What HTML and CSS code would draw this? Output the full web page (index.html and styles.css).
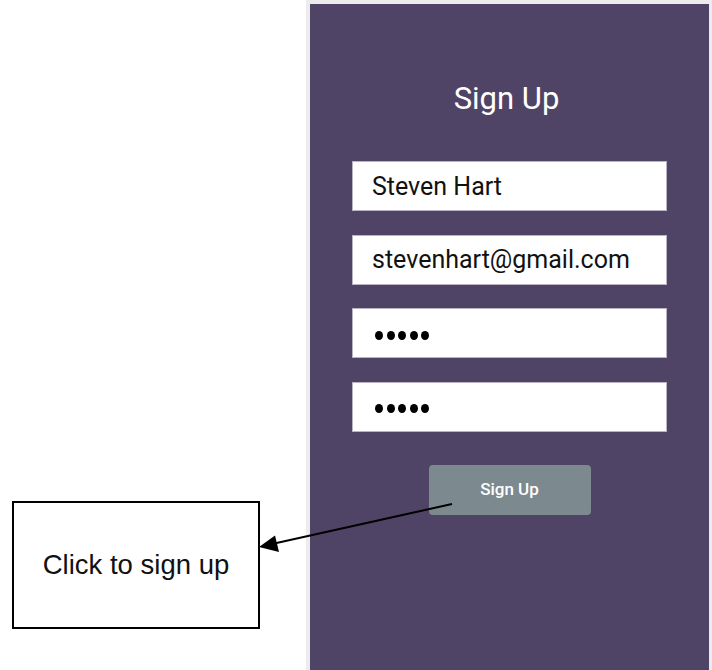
FILE: index.html
```html
<!DOCTYPE html>
<html>
<head>
<meta charset="utf-8">
<link rel="stylesheet" href="styles.css">
</head>
<body>
<div class="page">
  <div class="notes">
    <div class="callout">Click to sign up</div>
  </div>
  <div class="frame">
    <div class="screen">
      <h1 class="title">Sign Up</h1>
      <div class="form">
        <div class="field">Steven Hart</div>
        <div class="field">stevenhart@gmail.com</div>
        <div class="field dots"><span></span><span></span><span></span><span></span><span></span></div>
        <div class="field dots"><span></span><span></span><span></span><span></span><span></span></div>
      </div>
      <div class="btn">Sign Up</div>
    </div>
  </div>
  <svg class="arrow" width="712" height="670" viewBox="0 0 712 670">
    <line x1="452" y1="504" x2="272" y2="544" stroke="#000" stroke-width="2"/>
    <polygon points="259,547 275,535.5 279,552" fill="#000"/>
  </svg>
</div>
</body>
</html>
```
FILE: styles.css
```css
html, body {
  margin: 0;
  padding: 0;
  background: #fff;
}
.page {
  position: relative;
  width: 712px;
  height: 670px;
  overflow: hidden;
  display: flex;
}
.notes {
  width: 306px;
  flex: none;
  padding-top: 501px;
  padding-left: 12px;
  box-sizing: border-box;
}
.callout {
  width: 248px;
  height: 128px;
  box-sizing: border-box;
  border: 2px solid #000;
  display: flex;
  align-items: center;
  justify-content: center;
  font-family: "Liberation Sans", Arial, sans-serif;
  font-size: 27.5px;
  color: #111;
  padding-bottom: 1px;
}
.frame {
  flex: 1;
  border: 4px solid #ececec;
  border-bottom: none;
  border-right-width: 3px;
  height: 670px;
  box-sizing: border-box;
}
.screen {
  background: #4f4465;
  height: 100%;
  display: flex;
  flex-direction: column;
  align-items: center;
  font-family: Roboto, "Noto Sans", sans-serif;
}
.title {
  margin: 78px 6px 0 0;
  font-weight: 400;
  font-size: 31px;
  line-height: 34px;
  color: #fff;
}
.form {
  margin-top: 45px;
  display: flex;
  flex-direction: column;
  gap: 23.5px;
}
.field {
  width: 315px;
  height: 50px;
  box-sizing: border-box;
  background: #fff;
  border: 1px solid #b9b3c4;
  padding-left: 19px;
  display: flex;
  align-items: center;
  font-size: 25px;
  color: #111;
}
.field.dots {
  gap: 3.5px;
  padding-left: 22px;
  padding-top: 4px;
}
.field.dots span {
  width: 8px;
  height: 9px;
  border-radius: 50%;
  background: #000;
}
.btn {
  margin-top: 33px;
  width: 162px;
  height: 50px;
  border-radius: 4px;
  background: #7c8a8f;
  color: #fff;
  font-size: 17px;
  font-weight: 500;
  display: flex;
  align-items: center;
  justify-content: center;
  padding-bottom: 2px;
  box-sizing: border-box;
}
.arrow {
  position: absolute;
  left: 0;
  top: 0;
  pointer-events: none;
}
```
